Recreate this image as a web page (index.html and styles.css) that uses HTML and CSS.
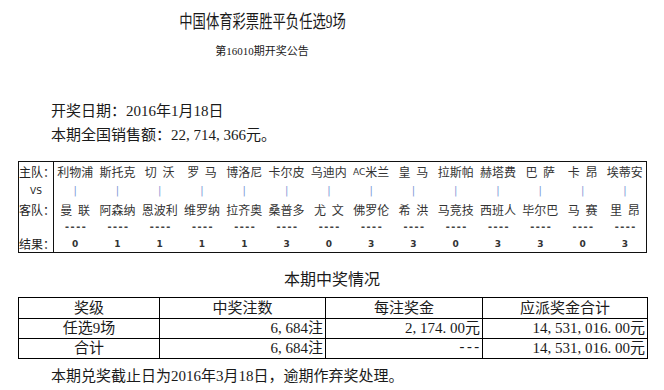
FILE: index.html
```html
<!DOCTYPE html>
<html lang="zh-CN">
<head>
<meta charset="utf-8">
<title>中国体育彩票胜平负任选9场</title>
<link rel="stylesheet" href="styles.css">
</head>
<body>
<div class="page">
  <div class="head">
    <h1 class="title"><span>中国体育彩票胜平负任选9场</span></h1>
    <p class="sub">第16010期开奖公告</p>
  </div>
  <div class="info">
    <p>开奖日期：2016年1月18日</p>
    <p>本期全国销售额：22<span class="p">,</span>714<span class="p">,</span>366元。</p>
  </div>

  <div class="matches">
    <div class="lbl">主队：</div>
    <div class="c">利物浦</div><div class="c">斯托克</div><div class="c">切 沃</div><div class="c">罗 马</div><div class="c">博洛尼</div><div class="c">卡尔皮</div><div class="c">乌迪内</div><div class="c"><span class="lat">AC</span>米兰</div><div class="c">皇 马</div><div class="c">拉斯帕</div><div class="c">赫塔费</div><div class="c">巴 萨</div><div class="c">卡 昂</div><div class="c">埃蒂安</div>

    <div class="lbl vs">VS</div>
    <div class="c bar">|</div><div class="c bar">|</div><div class="c bar">|</div><div class="c bar">|</div><div class="c bar">|</div><div class="c bar">|</div><div class="c bar">|</div><div class="c bar">|</div><div class="c bar">|</div><div class="c bar">|</div><div class="c bar">|</div><div class="c bar">|</div><div class="c bar">|</div><div class="c bar">|</div>

    <div class="lbl">客队：</div>
    <div class="c">曼 联</div><div class="c">阿森纳</div><div class="c">恩波利</div><div class="c">维罗纳</div><div class="c">拉齐奥</div><div class="c">桑普多</div><div class="c">尤 文</div><div class="c">佛罗伦</div><div class="c">希 洪</div><div class="c">马竞技</div><div class="c">西班人</div><div class="c">毕尔巴</div><div class="c">马 赛</div><div class="c">里 昂</div>

    <div class="lbl"></div>
    <div class="c dash">----</div><div class="c dash">----</div><div class="c dash">----</div><div class="c dash">----</div><div class="c dash">----</div><div class="c dash">----</div><div class="c dash">----</div><div class="c dash">----</div><div class="c dash">----</div><div class="c dash">----</div><div class="c dash">----</div><div class="c dash">----</div><div class="c dash">----</div><div class="c dash">----</div>

    <div class="lbl">结果：</div>
    <div class="c res">0</div><div class="c res">1</div><div class="c res">1</div><div class="c res">1</div><div class="c res">1</div><div class="c res">3</div><div class="c res">0</div><div class="c res">3</div><div class="c res">3</div><div class="c res">0</div><div class="c res">3</div><div class="c res">3</div><div class="c res">0</div><div class="c res">3</div>
  </div>

  <h2 class="sec">本期中奖情况</h2>
  <table class="prize">
    <colgroup><col class="w1"><col class="w2"><col class="w3"><col class="w4"></colgroup>
    <thead>
      <tr><th>奖级</th><th>中奖注数</th><th>每注奖金</th><th>应派奖金合计</th></tr>
    </thead>
    <tbody>
      <tr><td class="ctr">任选9场</td><td class="num">6<span class="p">,</span>684注</td><td class="num">2<span class="p">,</span>174<span class="p">.</span>00元</td><td class="num">14<span class="p">,</span>531<span class="p">,</span>016<span class="p">.</span>00元</td></tr>
      <tr><td class="ctr">合计</td><td class="num">6<span class="p">,</span>684注</td><td class="num none">---</td><td class="num">14<span class="p">,</span>531<span class="p">,</span>016<span class="p">.</span>00元</td></tr>
    </tbody>
  </table>
  <p class="foot">本期兑奖截止日为2016年3月18日，逾期作弃奖处理。</p>
</div>
</body>
</html>
```

FILE: styles.css
```css
html, body {
  margin: 0;
  padding: 0;
  background: #fff;
}
body {
  font-family: "Liberation Serif", "Noto Sans CJK SC", serif;
  color: #1a1a1a;
}
.page {
  width: 664px;
}
.head {
  width: 524px;
  text-align: center;
  padding-top: 11px;
}
.title {
  margin: 0;
  font-size: 18px;
  font-weight: normal;
  line-height: 22px;
}
.title span {
  display: inline-block;
  transform: scaleX(0.74);
}
.sub {
  margin: 10px 0 0;
  font-size: 11px;
  line-height: 16px;
}
.info {
  padding: 40px 0 0 51px;
  font-size: 15px;
}
.info p {
  margin: 0;
  line-height: 24px;
}
.p {
  display: inline-block;
  width: 0.5em;
  text-align: left;
}
.matches {
  margin: 14px 0 0 18px;
  width: 629px;
  box-sizing: border-box;
  border: 1px solid #111;
  display: grid;
  grid-template-columns: 35px repeat(14, 1fr);
  grid-template-rows: 19px 19px 18px 17px 17px;
  font-family: "Noto Sans CJK SC", sans-serif;
  font-size: 12px;
  color: #333;
}
.lbl {
  border-right: 1px solid #111;
  display: flex;
  align-items: center;
  font-size: 12px;
  color: #222;
  white-space: nowrap;
}
.lbl.vs {
  justify-content: center;
  font-family: "DejaVu Sans", sans-serif;
  font-size: 9px;
  color: #222;
}
.c {
  display: flex;
  align-items: center;
  justify-content: center;
  white-space: pre;
  word-spacing: 3px;
}
.lat {
  font-family: "DejaVu Sans", sans-serif;
  font-size: 9px;
}
.bar {
  font-family: "DejaVu Sans", sans-serif;
  font-size: 10px;
  color: #7d98d6;
}
.dash {
  font-family: "DejaVu Sans Mono", monospace;
  font-size: 10px;
  font-weight: bold;
  color: #444;
  letter-spacing: -0.5px;
}
.res {
  font-family: "DejaVu Sans", sans-serif;
  font-size: 9px;
  font-weight: bold;
  color: #333;
}
.sec {
  margin: 16px 0 0;
  text-align: center;
  font-size: 16px;
  font-weight: normal;
  line-height: 22px;
}
.prize {
  margin: 6px 0 0 18px;
  width: 629px;
  border-collapse: collapse;
  table-layout: fixed;
  font-size: 15px;
}
.w1 { width: 141px; }
.w2 { width: 166px; }
.w3 { width: 157px; }
.w4 { width: 165px; }
.prize th, .prize td {
  border: 1px solid #000;
  padding: 0 2px;
  line-height: 19px;
  font-weight: normal;
}
.prize th {
  height: 20px;
  text-align: center;
}
.prize td {
  height: 19px;
}
.ctr { text-align: center; }
.num { text-align: right; }
.prize td.none {
  font-family: "Liberation Mono", monospace;
  font-size: 14px;
  letter-spacing: -1px;
}
.foot {
  margin: 6px 0 0 51px;
  font-size: 15px;
  line-height: 22px;
}
```
